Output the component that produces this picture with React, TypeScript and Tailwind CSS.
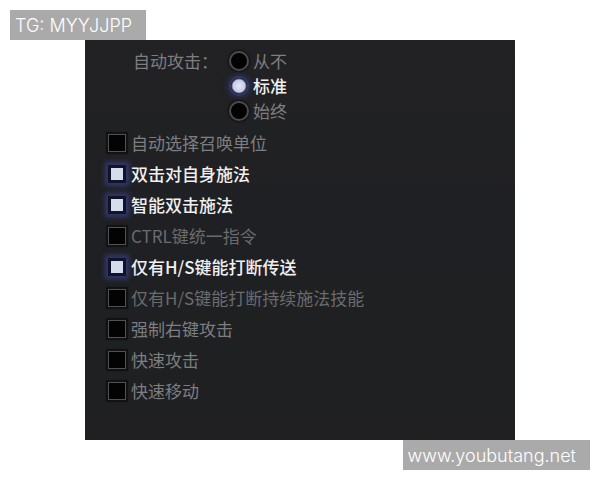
import { useState } from "react";
import clsx from "clsx";

const attackModes = [
  { id: "never", label: "从不" },
  { id: "standard", label: "标准" },
  { id: "always", label: "始终" },
];

const initialOptions = [
  { id: "summon", label: "自动选择召唤单位", checked: false },
  { id: "selfcast", label: "双击对自身施法", checked: true },
  { id: "smartcast", label: "智能双击施法", checked: true },
  { id: "ctrl", label: "CTRL键统一指令", checked: false, dim: true },
  { id: "teleport", label: "仅有H/S键能打断传送", checked: true },
  { id: "channel", label: "仅有H/S键能打断持续施法技能", checked: false, dim: true },
  { id: "rightclick", label: "强制右键攻击", checked: false },
  { id: "quickattack", label: "快速攻击", checked: false },
  { id: "quickmove", label: "快速移动", checked: false },
];

const labelClass = (active: boolean, dim?: boolean) =>
  clsx(
    "text-[17px] whitespace-nowrap",
    active ? "font-medium text-[#f0f0f2]" : dim ? "text-[#6a6b6d]" : "text-[#7e7e80]"
  );

const Tag = ({ children }: { children: string }) => (
  <span className="flex h-[30px] items-center bg-[#aaaaaa] pr-[14px] pl-[5px] font-['Inter','Liberation_Sans',sans-serif] text-[18px] font-light text-white">
    {children}
  </span>
);

const App = () => {
  const [mode, setMode] = useState("standard");
  const [options, setOptions] = useState(initialOptions);

  function toggle(id: string) {
    setOptions(options.map((o) => (o.id === id ? { ...o, checked: !o.checked } : o)));
  }

  return (
    <div className="flex flex-col bg-white py-[10px]">
      <header className="flex px-[10px]">
        <Tag>TG: MYYJJPP</Tag>
      </header>
      <main className="mx-[85px] bg-[#202023] bg-linear-to-b from-[#222224] via-[#1f2023] to-[#202022] pt-2 pb-[34px] pl-[23px] font-['Noto_Sans_CJK_SC',sans-serif]">
        <fieldset className="flex pl-[25px]">
          <legend className="float-left h-[25px] w-[96px] text-[17px] leading-[25px] whitespace-nowrap text-[#7e7e80]">
            自动攻击：
          </legend>
          <div className="flex flex-col">
            {attackModes.map((m) => (
              <label key={m.id} className="flex h-[25px] items-center gap-1">
                <input
                  type="radio"
                  name="attack"
                  checked={mode === m.id}
                  onChange={() => setMode(m.id)}
                  className="size-5 appearance-none rounded-full border-2 border-[#4c4c4f] bg-[#030304] shadow-[0_0_2px_1px_#111113] checked:border-[#343963] checked:bg-[radial-gradient(circle,#e6e9f8_0px,#c6cbe6_6px,#0b0c1c_8px)] checked:shadow-[0_0_5px_2px_#2b2e54]"
                />
                <span className={labelClass(mode === m.id)}>{m.label}</span>
              </label>
            ))}
          </div>
        </fieldset>
        <div className="flex flex-col pt-1">
          {options.map((o) => (
            <label key={o.id} className="flex h-[31px] items-center gap-[5px]">
              <input
                type="checkbox"
                checked={o.checked}
                onChange={() => toggle(o.id)}
                className="size-[18px] appearance-none border border-[#505153] bg-[#030304] shadow-[0_0_1px_2px_#121214] checked:border-3 checked:border-[#11132a] checked:bg-[#d5dcec] checked:shadow-[0_0_5px_3px_#34386e]"
              />
              <span className={labelClass(o.checked, o.dim)}>{o.label}</span>
            </label>
          ))}
        </div>
      </main>
      <footer className="flex justify-end px-[10px]">
        <Tag>www.youbutang.net</Tag>
      </footer>
    </div>
  );
};
export default App;
